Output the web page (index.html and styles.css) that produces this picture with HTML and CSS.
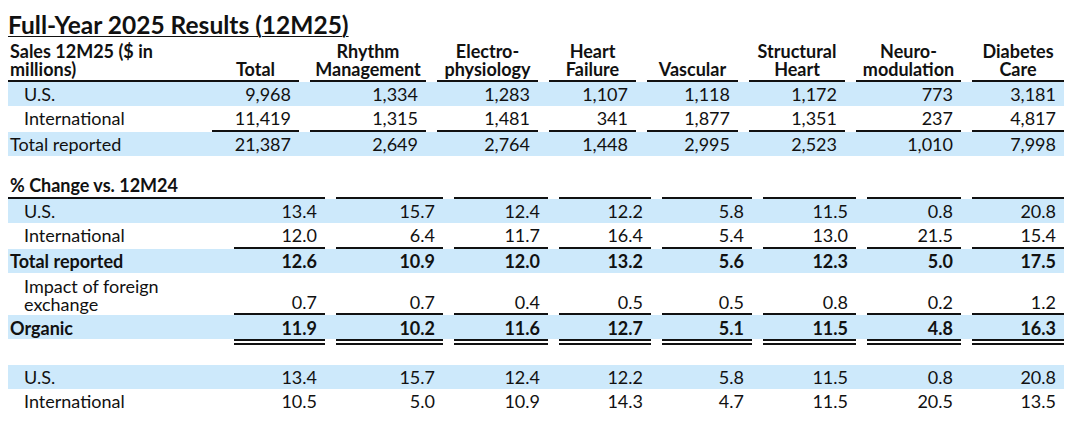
FILE: index.html
```html
<!DOCTYPE html>
<html lang="en">
<head>
<meta charset="utf-8">
<title>Full-Year 2025 Results (12M25)</title>
<link rel="stylesheet" href="styles.css">
</head>
<body>
<h1 class="title">Full-Year 2025 Results (12M25)</h1>

<div class="tbl tbl-sales">
  <div class="row head">
    <div class="c lab">Sales 12M25 ($ in millions)</div>
    <div class="c tot">Total</div>
    <div class="c">Rhythm<br>Management</div>
    <div class="c">Electro-<br>physiology</div>
    <div class="c">Heart<br>Failure</div>
    <div class="c">Vascular</div>
    <div class="c">Structural<br>Heart</div>
    <div class="c">Neuro-<br>modulation</div>
    <div class="c">Diabetes<br>Care</div>
  </div>
  <div class="row hl">
    <div class="c lab ind">U.S.</div>
    <div class="c tot">9,968</div>
    <div class="c">1,334</div>
    <div class="c">1,283</div>
    <div class="c">1,107</div>
    <div class="c">1,118</div>
    <div class="c">1,172</div>
    <div class="c">773</div>
    <div class="c">3,181</div>
  </div>
  <div class="row sub">
    <div class="c lab ind">International</div>
    <div class="c tot">11,419</div>
    <div class="c">1,315</div>
    <div class="c">1,481</div>
    <div class="c">341</div>
    <div class="c">1,877</div>
    <div class="c">1,351</div>
    <div class="c">237</div>
    <div class="c">4,817</div>
  </div>
  <div class="row hl">
    <div class="c lab">Total reported</div>
    <div class="c tot">21,387</div>
    <div class="c">2,649</div>
    <div class="c">2,764</div>
    <div class="c">1,448</div>
    <div class="c">2,995</div>
    <div class="c">2,523</div>
    <div class="c">1,010</div>
    <div class="c">7,998</div>
  </div>
</div>

<div class="tbl tbl-change">
  <div class="row head">
    <div class="c lab">% Change vs. 12M24</div>
    <div class="c tot"></div>
    <div class="c"></div>
    <div class="c"></div>
    <div class="c"></div>
    <div class="c"></div>
    <div class="c"></div>
    <div class="c"></div>
    <div class="c"></div>
  </div>
  <div class="row hl">
    <div class="c lab ind">U.S.</div>
    <div class="c tot">13.4</div>
    <div class="c">15.7</div>
    <div class="c">12.4</div>
    <div class="c">12.2</div>
    <div class="c">5.8</div>
    <div class="c">11.5</div>
    <div class="c">0.8</div>
    <div class="c">20.8</div>
  </div>
  <div class="row sub">
    <div class="c lab ind">International</div>
    <div class="c tot">12.0</div>
    <div class="c">6.4</div>
    <div class="c">11.7</div>
    <div class="c">16.4</div>
    <div class="c">5.4</div>
    <div class="c">13.0</div>
    <div class="c">21.5</div>
    <div class="c">15.4</div>
  </div>
  <div class="row hl strong">
    <div class="c lab">Total reported</div>
    <div class="c tot">12.6</div>
    <div class="c">10.9</div>
    <div class="c">12.0</div>
    <div class="c">13.2</div>
    <div class="c">5.6</div>
    <div class="c">12.3</div>
    <div class="c">5.0</div>
    <div class="c">17.5</div>
  </div>
  <div class="row sub tall">
    <div class="c lab ind">Impact of foreign<br>exchange</div>
    <div class="c tot">0.7</div>
    <div class="c">0.7</div>
    <div class="c">0.4</div>
    <div class="c">0.5</div>
    <div class="c">0.5</div>
    <div class="c">0.8</div>
    <div class="c">0.2</div>
    <div class="c">1.2</div>
  </div>
  <div class="row hl strong organic">
    <div class="c lab">Organic</div>
    <div class="c tot">11.9</div>
    <div class="c">10.2</div>
    <div class="c">11.6</div>
    <div class="c">12.7</div>
    <div class="c">5.1</div>
    <div class="c">11.5</div>
    <div class="c">4.8</div>
    <div class="c">16.3</div>
  </div>
  <div class="row rules">
    <div class="c lab"></div>
    <div class="c tot"></div>
    <div class="c"></div>
    <div class="c"></div>
    <div class="c"></div>
    <div class="c"></div>
    <div class="c"></div>
    <div class="c"></div>
    <div class="c"></div>
  </div>
  <div class="row hl">
    <div class="c lab ind">U.S.</div>
    <div class="c tot">13.4</div>
    <div class="c">15.7</div>
    <div class="c">12.4</div>
    <div class="c">12.2</div>
    <div class="c">5.8</div>
    <div class="c">11.5</div>
    <div class="c">0.8</div>
    <div class="c">20.8</div>
  </div>
  <div class="row">
    <div class="c lab ind">International</div>
    <div class="c tot">10.5</div>
    <div class="c">5.0</div>
    <div class="c">10.9</div>
    <div class="c">14.3</div>
    <div class="c">4.7</div>
    <div class="c">11.5</div>
    <div class="c">20.5</div>
    <div class="c">13.5</div>
  </div>
</div>
</body>
</html>
```

FILE: styles.css
```css
html, body {
  margin: 0;
  padding: 0;
  background: #ffffff;
}

body {
  padding: 8px 16px 0 8px;
  font-family: "Lato", "Liberation Sans", sans-serif;
  font-size: 18px;
  color: #111111;
}

.title {
  margin: 2px 0 0 0;
  font-size: 24.5px;
  line-height: 30px;
  font-weight: 700;
  text-decoration: underline;
  text-decoration-thickness: 1px;
  text-underline-offset: 2px;
  color: #111;
}

.tbl {
  width: 1056px;
}

.tbl-sales {
  --cols: 204px 87px 127px 112px 98px 102px 107px 116px 103px;
  margin-top: 2px;
}

.tbl-change {
  --cols: 226px 91px 118px 105px 103px 101px 104px 105px 103px;
  margin-top: 20px;
}

.row {
  display: grid;
  grid-template-columns: var(--cols);
}

.hl {
  background: #cde9fb;
}

.c {
  height: 24px;
  line-height: 24px;
  text-align: right;
  padding-right: 8px;
  margin-left: 11px;
  white-space: nowrap;
}

.c.lab {
  margin-left: 0;
  padding-left: 2px;
  padding-right: 0;
  text-align: left;
}

.c.tot {
  margin-left: 0;
}

.c.ind {
  padding-left: 16px;
}

.strong .c {
  font-weight: 700;
}

.head .c {
  height: auto;
  display: flex;
  align-items: flex-end;
  justify-content: center;
  text-align: center;
  font-weight: 700;
  line-height: 18px;
  padding: 0 0 2px 0;
  border-bottom: 2px solid #111;
  white-space: normal;
}

.head .c.lab {
  justify-content: flex-start;
  text-align: left;
  padding-left: 2px;
  padding-right: 12px;
}

.tbl-change .head .c {
  padding-bottom: 3px;
}

.sub .c:not(.lab) {
  border-bottom: 2px solid #111;
}

.tall .c {
  display: flex;
  align-items: flex-end;
  justify-content: flex-end;
  line-height: 18px;
  padding-bottom: 2px;
  box-sizing: border-box;
  height: 42px;
}

.tall .c.lab {
  justify-content: flex-start;
  white-space: normal;
}

.organic .c {
  height: 24px;
  line-height: 26px;
}

.rules .c {
  height: 20px;
}

.rules .c:not(.lab) {
  border-top: 6px double #111;
}
```
